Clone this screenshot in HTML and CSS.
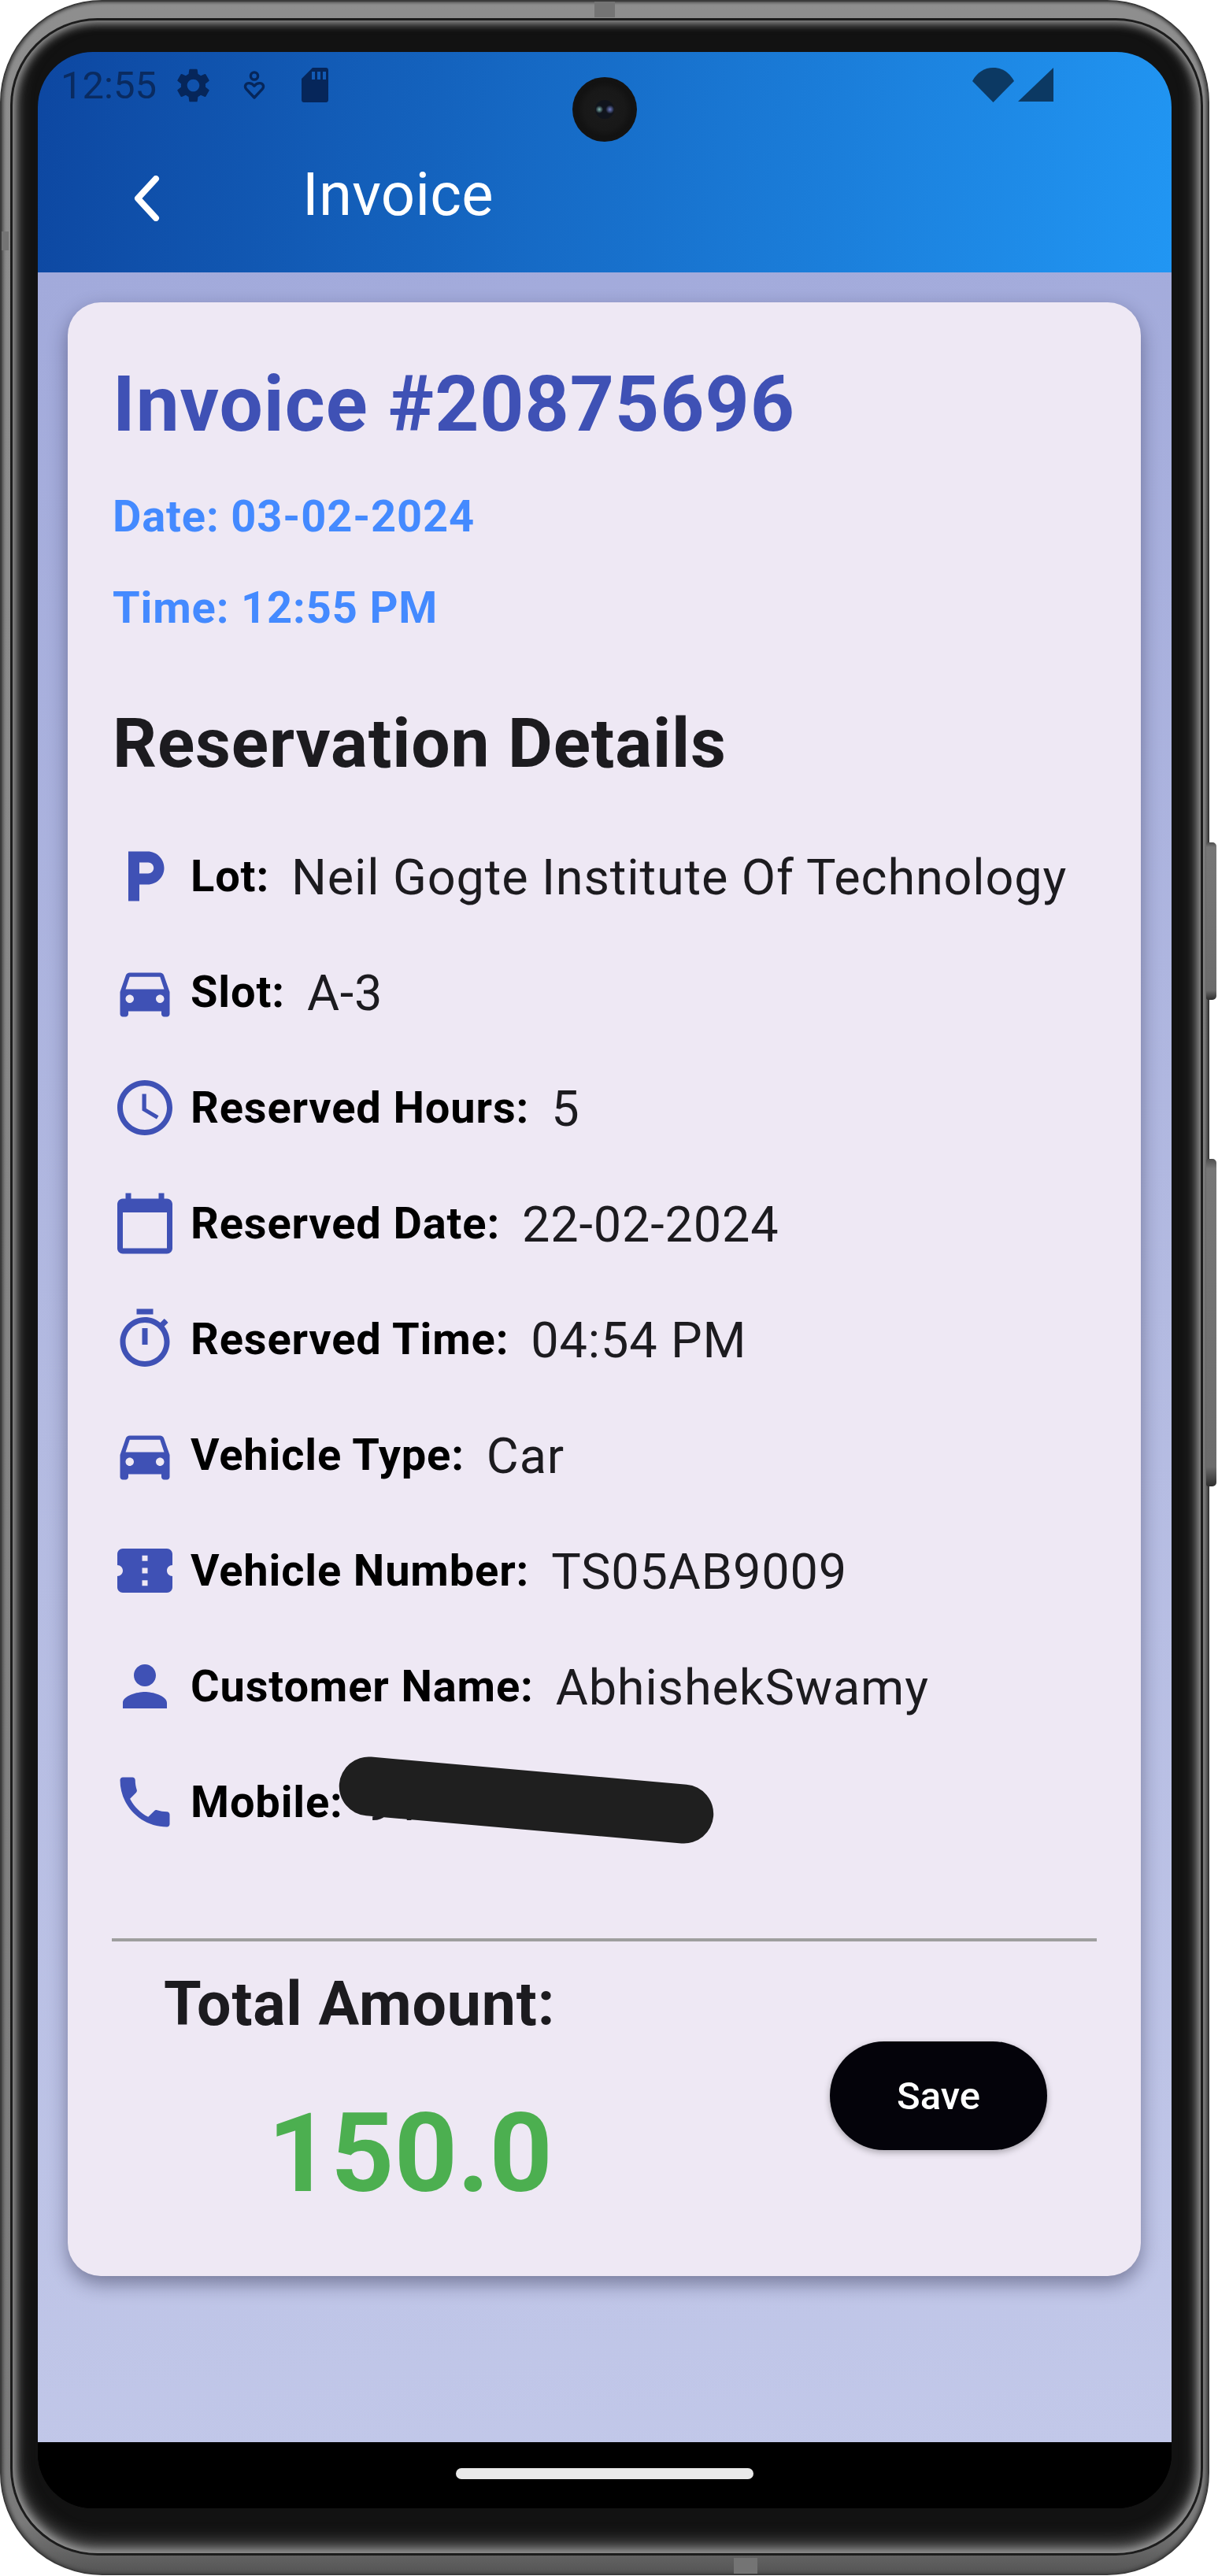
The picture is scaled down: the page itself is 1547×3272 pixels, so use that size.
FILE: index.html
```html
<!DOCTYPE html>
<html lang="en">
<head>
    <meta charset="UTF-8">
    <meta name="viewport" content="width=device-width, initial-scale=1.0">
    <title>Invoice</title>
    <link rel="stylesheet" href="styles.css">
</head>
<body>
    <div class="phone">
        <span class="nub nub-top"></span>
        <span class="nub nub-bottom"></span>
        <span class="nub nub-left"></span>
        <span class="side-btn side-power"></span>
        <span class="side-btn side-volume"></span>

        <div class="bezel">
            <div class="screen">
                <span class="camera"><span class="lens"></span></span>

                <header class="app-bar">
                    <div class="status-bar">
                        <div class="status-left">
                            <span class="clock">12:55</span>
                            <svg class="st-gear" viewBox="2.4 1.6 19.2 20.8"><path d="M19.14 12.94c.04-.3.06-.61.06-.94 0-.32-.02-.64-.07-.94l2.03-1.58c.18-.14.23-.41.12-.61l-1.92-3.32c-.12-.22-.37-.29-.59-.22l-2.39.96c-.5-.38-1.03-.7-1.62-.94l-.36-2.54c-.04-.24-.24-.41-.48-.41h-3.84c-.24 0-.43.17-.47.41l-.36 2.54c-.59.24-1.13.57-1.62.94l-2.39-.96c-.22-.08-.47 0-.59.22L2.74 8.87c-.12.21-.08.47.12.61l2.03 1.58c-.05.3-.09.63-.09.94s.02.64.07.94l-2.03 1.58c-.18.14-.23.41-.12.61l1.92 3.32c.12.22.37.29.59.22l2.39-.96c.5.38 1.03.7 1.62.94l.36 2.54c.05.24.24.41.48.41h3.84c.24 0 .44-.17.47-.41l.36-2.54c.59-.24 1.13-.56 1.62-.94l2.39.96c.22.08.47 0 .59-.22l1.92-3.32c.12-.22.07-.47-.12-.61l-2.01-1.58zM12 15.6c-1.98 0-3.6-1.62-3.6-3.6s1.62-3.6 3.6-3.6 3.6 1.62 3.6 3.6-1.62 3.6-3.6 3.6z"/></svg>
                            <svg class="st-heart" viewBox="0 0 28 37"><circle cx="14" cy="6.5" r="4.6"/><path d="M14 34 L3.6 22.8 C1 19.4 3.4 15.6 7.2 15.6 C10 15.6 12.4 17 14 19.2 C15.6 17 18 15.6 20.8 15.6 C24.6 15.6 27 19.4 24.4 22.8 Z" stroke-linejoin="round"/></svg>
                            <svg class="st-sd" viewBox="0 0 34 44"><path d="M14 0h17c1.7 0 3 1.3 3 3v38c0 1.7-1.3 3-3 3H3c-1.7 0-3-1.3-3-3V14zM13 5v10h4V5zm7 0v10h4V5zm7 0v10h4V5z" fill-rule="evenodd"/></svg>
                        </div>
                        <div class="status-right">
                            <svg class="st-wifi" viewBox="0 0 53 44"><path d="M26.5 44 0 17C6 6 15 0 26.5 0S47 6 53 17z"/></svg>
                            <svg class="st-signal" viewBox="0 0 45 43"><path d="M45 0v43H0z"/></svg>
                        </div>
                    </div>
                    <div class="toolbar">
                        <svg class="back-icon" viewBox="0 0 34 58"><path d="M28 4 5 29l23 25"/></svg>
                        <h1 class="toolbar-title">Invoice</h1>
                    </div>
                </header>

                <main class="content">
                    <section class="invoice-card">
                        <h2 class="invoice-number">Invoice #20875696</h2>
                        <p class="invoice-meta">Date: 03-02-2024</p>
                        <p class="invoice-meta meta-time">Time: 12:55 PM</p>

                        <h3 class="section-title">Reservation Details</h3>

                        <ul class="details">
                            <li class="detail-row">
                                <svg class="detail-icon" viewBox="0 0 24 24"><path d="M13 3H6v18h4v-6h3c3.31 0 6-2.69 6-6s-2.69-6-6-6zm.2 8H10V7h3.2c1.1 0 2 .9 2 2s-.9 2-2 2z"/></svg>
                                <span class="detail-label">Lot:</span>
                                <span class="detail-value">Neil Gogte Institute Of Technology</span>
                            </li>
                            <li class="detail-row">
                                <svg class="detail-icon" viewBox="0 0 24 24"><path d="M18.92 6.01C18.72 5.42 18.16 5 17.5 5h-11c-.66 0-1.21.42-1.42 1.01L3 12v8c0 .55.45 1 1 1h1c.55 0 1-.45 1-1v-1h12v1c0 .55.45 1 1 1h1c.55 0 1-.45 1-1v-8l-2.08-5.99zM6.5 16c-.83 0-1.5-.67-1.5-1.5S5.67 13 6.5 13s1.5.67 1.5 1.5S7.33 16 6.5 16zm11 0c-.83 0-1.5-.67-1.5-1.5s.67-1.5 1.5-1.5 1.5.67 1.5 1.5-.67 1.5-1.5 1.5zM5 11l1.5-4.5h11L19 11H5z"/></svg>
                                <span class="detail-label">Slot:</span>
                                <span class="detail-value">A-3</span>
                            </li>
                            <li class="detail-row">
                                <svg class="detail-icon" viewBox="0 0 24 24"><path d="M11.99 2C6.47 2 2 6.48 2 12s4.47 10 9.99 10C17.52 22 22 17.52 22 12S17.52 2 11.99 2zM12 20c-4.42 0-8-3.58-8-8s3.58-8 8-8 8 3.58 8 8-3.58 8-8 8zm.5-13H11v6l5.25 3.15.75-1.23-4.5-2.67z"/></svg>
                                <span class="detail-label">Reserved Hours:</span>
                                <span class="detail-value">5</span>
                            </li>
                            <li class="detail-row">
                                <svg class="detail-icon" viewBox="0 0 24 24"><path d="M20 3h-1V1h-2v2H7V1H5v2H4c-1.1 0-2 .9-2 2v16c0 1.1.9 2 2 2h16c1.1 0 2-.9 2-2V5c0-1.1-.9-2-2-2zm0 18H4V8h16v13z"/></svg>
                                <span class="detail-label">Reserved Date:</span>
                                <span class="detail-value">22-02-2024</span>
                            </li>
                            <li class="detail-row">
                                <svg class="detail-icon" viewBox="0 0 24 24"><path d="M15 1H9v2h6V1zm-4 13h2V8h-2v6zm8.03-6.61l1.42-1.42c-.43-.51-.9-.99-1.41-1.41l-1.42 1.42C16.07 4.74 14.12 4 12 4c-4.97 0-9 4.03-9 9s4.02 9 9 9 9-4.03 9-9c0-2.12-.74-4.07-1.97-5.61zM12 20c-3.87 0-7-3.13-7-7s3.13-7 7-7 7 3.13 7 7-3.13 7-7 7z"/></svg>
                                <span class="detail-label">Reserved Time:</span>
                                <span class="detail-value">04:54 PM</span>
                            </li>
                            <li class="detail-row">
                                <svg class="detail-icon" viewBox="0 0 24 24"><path d="M18.92 6.01C18.72 5.42 18.16 5 17.5 5h-11c-.66 0-1.21.42-1.42 1.01L3 12v8c0 .55.45 1 1 1h1c.55 0 1-.45 1-1v-1h12v1c0 .55.45 1 1 1h1c.55 0 1-.45 1-1v-8l-2.08-5.99zM6.5 16c-.83 0-1.5-.67-1.5-1.5S5.67 13 6.5 13s1.5.67 1.5 1.5S7.33 16 6.5 16zm11 0c-.83 0-1.5-.67-1.5-1.5s.67-1.5 1.5-1.5 1.5.67 1.5 1.5-.67 1.5-1.5 1.5zM5 11l1.5-4.5h11L19 11H5z"/></svg>
                                <span class="detail-label">Vehicle Type:</span>
                                <span class="detail-value">Car</span>
                            </li>
                            <li class="detail-row">
                                <svg class="detail-icon" viewBox="0 0 24 24"><path d="M22 10V6c0-1.11-.9-2-2-2H4c-1.1 0-1.99.89-1.99 2v4c1.1 0 1.99.9 1.99 2s-.89 2-2 2v4c0 1.1.9 2 2 2h16c1.1 0 2-.9 2-2v-4c-1.1 0-2-.9-2-2s.9-2 2-2zm-9 7.5h-2v-2h2v2zm0-4.5h-2v-2h2v2zm0-4.5h-2v-2h2v2z"/></svg>
                                <span class="detail-label">Vehicle Number:</span>
                                <span class="detail-value">TS05AB9009</span>
                            </li>
                            <li class="detail-row">
                                <svg class="detail-icon" viewBox="0 0 24 24"><path d="M12 12c2.21 0 4-1.79 4-4s-1.79-4-4-4-4 1.79-4 4 1.79 4 4 4zm0 2c-2.67 0-8 1.34-8 4v2h16v-2c0-2.66-5.33-4-8-4z"/></svg>
                                <span class="detail-label">Customer Name:</span>
                                <span class="detail-value">AbhishekSwamy</span>
                            </li>
                            <li class="detail-row">
                                <svg class="detail-icon" viewBox="0 0 24 24"><path d="M6.62 10.79c1.44 2.83 3.76 5.14 6.59 6.59l2.2-2.2c.27-.27.67-.36 1.02-.24 1.12.37 2.33.57 3.57.57.55 0 1 .45 1 1V20c0 .55-.45 1-1 1-9.39 0-17-7.61-17-17 0-.55.45-1 1-1h3.5c.55 0 1 .45 1 1 0 1.25.2 2.45.57 3.57.11.35.03.74-.25 1.02l-2.2 2.2z"/></svg>
                                <span class="detail-label">Mobile:</span>
                                <span class="detail-value">91</span>
                                <span class="redaction"></span>
                            </li>
                        </ul>

                        <hr class="divider">

                        <div class="total-row">
                            <div class="total-text">
                                <div class="total-label">Total Amount:</div>
                                <div class="total-value">150.0</div>
                            </div>
                            <button class="save-btn" type="button">Save</button>
                        </div>
                    </section>
                </main>

                <div class="nav-bar"><span class="home-pill"></span></div>
            </div>
        </div>
    </div>
</body>
</html>
```

FILE: styles.css
```css
* {
    box-sizing: border-box;
}

html, body {
    margin: 0;
    padding: 0;
    background-color: #fff;
}

body {
    font-family: Roboto, "Noto Sans", sans-serif;
    color: #1c1b1f;
    height: 3272px;
    overflow: hidden;
}

/* phone frame */
.phone {
    position: relative;
    width: 1536px;
    height: 3271px;
    padding: 24px 9px 26px 14px;
    border: 2px solid #3a3a3a;
    border-radius: 130px;
    background: linear-gradient(180deg, #8e8e8e 0, #8a8a8a 30%, #7a7a7a 98%, #555 100%);
    box-shadow: inset 2px 0 4px #444, inset -2px 0 4px #444;
}

.bezel {
    height: 100%;
    padding: 40px 37px 57px 32px;
    border-radius: 108px;
    background-color: #121212;
    box-shadow: 0 0 0 3px #1c1c1c, inset 0 0 12px 3px #a0a0a0, inset 0 -10px 22px 2px #666;
}

.nub {
    position: absolute;
    background-color: #747474;
}

.nub-top {
    top: 0;
    left: 753px;
    width: 26px;
    height: 20px;
}

.nub-bottom {
    bottom: 0;
    left: 930px;
    width: 30px;
    height: 20px;
}

.nub-left {
    top: 292px;
    left: 0;
    width: 9px;
    height: 24px;
}

.side-btn {
    position: absolute;
    right: -11px;
    width: 13px;
    border-radius: 3px 5px 5px 3px;
    background: linear-gradient(180deg, #4e4e4e 0, #777 3%, #6c6c6c 94%, #2e2e2e 100%);
}

.side-power {
    top: 1068px;
    height: 200px;
}

.side-volume {
    top: 1470px;
    height: 416px;
}

/* screen */
.screen {
    position: relative;
    display: flex;
    flex-direction: column;
    height: 100%;
    border-radius: 70px;
    overflow: hidden;
    background-color: #000;
}

.camera {
    position: absolute;
    top: 32px;
    left: 679px;
    display: flex;
    align-items: center;
    justify-content: center;
    width: 82px;
    height: 82px;
    border-radius: 50%;
    background: radial-gradient(circle, #1b1b1b 0, #181818 45%, #121212 60%, #141414 100%);
}

.lens {
    width: 24px;
    height: 24px;
    border-radius: 50%;
    background:
        radial-gradient(circle at 22% 50%, #7fb3ad 0, rgba(127, 179, 173, 0) 22%),
        radial-gradient(circle at 78% 50%, #6f7cc4 0, rgba(111, 124, 196, 0) 25%),
        #10141c;
}

.app-bar {
    flex: none;
    height: 280px;
    background: linear-gradient(98deg, #0d47a1 0, #2196f3 100%);
}

.status-bar {
    display: flex;
    justify-content: space-between;
    align-items: flex-start;
    padding: 20px 150px 0 29px;
    height: 92px;
}

.status-left,
.status-right {
    display: flex;
    align-items: flex-start;
}

.status-left svg {
    fill: #06265a;
}

.status-right svg {
    fill: #0c3963;
}

.clock {
    width: 146px;
    font-size: 49px;
    line-height: 45px;
    color: #0a2b60;
}

.st-gear {
    width: 45px;
    height: 45px;
}

.status-left .st-heart {
    width: 28px;
    height: 37px;
    margin: 4px 0 0 41px;
    fill: none;
    stroke: #06265a;
    stroke-width: 3.4;
}

.st-sd {
    width: 34px;
    height: 44px;
    margin-left: 46px;
}

.st-wifi {
    width: 53px;
    height: 44px;
}

.st-signal {
    width: 45px;
    height: 43px;
    margin-left: 5px;
}

.toolbar {
    display: flex;
    align-items: center;
    height: 188px;
    padding-left: 122px;
}

.back-icon {
    width: 34px;
    height: 58px;
    fill: none;
    stroke: #fff;
    stroke-width: 8;
    stroke-linecap: round;
    stroke-linejoin: round;
}

.toolbar-title {
    margin: -10px 0 0 180px;
    font-size: 76px;
    font-weight: 400;
    line-height: 89px;
    letter-spacing: 0.3px;
    color: #fff;
}

/* page body */
.content {
    flex: 1;
    padding: 38px 39px 0 38px;
    background: linear-gradient(174deg, #a2aadb 0, #b3bae1 50%, #c2c8e9 100%);
}

.invoice-card {
    height: 2507px;
    padding: 72px 56px 0;
    border-radius: 42px;
    background-color: #eee8f4;
    box-shadow: 0 10px 24px rgba(20, 20, 50, 0.42);
}

.invoice-number {
    margin: 0 0 0 1px;
    font-size: 98px;
    font-weight: 700;
    line-height: 115px;
    letter-spacing: 1px;
    color: #3f51b5;
}

.invoice-meta {
    margin: 52px 0 0 1px;
    font-size: 56px;
    font-weight: 700;
    line-height: 66px;
    letter-spacing: 0.85px;
    color: #448aff;
}

.meta-time {
    margin-top: 50px;
}

.section-title {
    margin: 90px 0 0 1px;
    font-size: 87.5px;
    font-weight: 700;
    line-height: 98px;
    letter-spacing: 0.85px;
    color: #1c1b1f;
}

/* detail rows */
.details {
    margin: 78px 0 0;
    padding: 0;
    list-style: none;
}

.detail-row {
    position: relative;
    display: flex;
    align-items: center;
    height: 84px;
    margin-bottom: 63px;
}

.detail-row:last-child {
    margin-bottom: 0;
}

.detail-icon {
    flex: none;
    width: 84px;
    height: 84px;
    fill: #3f51b5;
}

.detail-label {
    margin-left: 16px;
    font-size: 56px;
    font-weight: 700;
    letter-spacing: 0.85px;
    color: #000;
}

.detail-value {
    margin-left: 28px;
    padding-top: 2px;
    font-size: 63px;
    letter-spacing: 0.85px;
    color: #1c1b1f;
}

.redaction {
    position: absolute;
    top: 2px;
    left: 288px;
    width: 477px;
    height: 75px;
    border-radius: 38px;
    background-color: #1f1f1f;
    transform: rotate(5deg);
}

.divider {
    height: 4px;
    margin: 131px 0 0;
    border: 0;
    background-color: #9e9e9e;
}

/* total */
.total-row {
    display: flex;
    justify-content: space-between;
    align-items: center;
    padding: 0 63px 0 66px;
    margin-top: 31px;
}

.total-label {
    font-size: 77px;
    font-weight: 700;
    line-height: 98px;
    letter-spacing: 0.85px;
    color: #1c1b1f;
}

.total-value {
    margin: 58px 0 0 132px;
    font-size: 140px;
    font-weight: 700;
    line-height: 164px;
    color: #4caf50;
}

.save-btn {
    width: 276px;
    height: 138px;
    margin-top: 10px;
    padding: 0;
    border: 0;
    border-radius: 69px;
    background-color: #04030a;
    box-shadow: 0 3px 8px rgba(0, 0, 0, 0.3);
    font-family: inherit;
    font-size: 49px;
    font-weight: 500;
    color: #fff;
}

/* gesture bar */
.nav-bar {
    flex: none;
    display: flex;
    justify-content: center;
    align-items: center;
    height: 84px;
    background-color: #000;
}

.home-pill {
    width: 378px;
    height: 14px;
    margin-bottom: 4px;
    border-radius: 7px;
    background-color: #e9e9e9;
}
```
